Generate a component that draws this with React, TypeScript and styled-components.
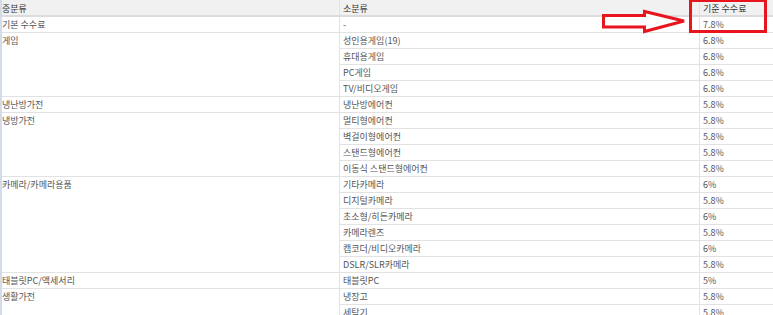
import React from 'react';
import styled, { createGlobalStyle } from 'styled-components';

const GlobalStyle = createGlobalStyle`
  html, body {
    margin: 0;
    padding: 0;
    background: #ffffff;
  }
  body {
    font-family: "Noto Sans CJK KR", "Noto Sans", sans-serif;
  }
`;

/* ── Layout ── */

const Frame = styled.div`
  position: relative;
  width: 773px;
  height: 315px;
  overflow: hidden;
  background: #eef1f5;
  border-left: 2px solid #d3dce8;
  box-sizing: border-box;
`;

const Table = styled.table`
  width: 767px;
  border-collapse: collapse;
  table-layout: fixed;
  font-size: 9px;
  color: #555555;
  background: #ffffff;
  border-right: 1px solid #d6d6d6;
`;

const HeadCell = styled.th<{ $w: number }>`
  width: ${({ $w }) => $w}px;
  height: 14px;
  padding: 1px 0 0 3px;
  text-align: left;
  font-weight: 400;
  color: #333333;
  background: #f1f1f1;
  border-bottom: 2px solid #dcdcdc;
  border-left: 1px solid #e2e2e2;
  line-height: 13px;
  white-space: nowrap;

  &:first-child {
    border-left: none;
    padding-left: 0;
  }
`;

const Cell = styled.td<{ $first?: boolean }>`
  height: 15px;
  padding: 0 0 0 ${({ $first }) => ($first ? 0 : 3)}px;
  vertical-align: top;
  line-height: 15px;
  border-bottom: 1px solid #e2e2e2;
  border-left: ${({ $first }) => ($first ? 'none' : '1px solid #e2e2e2')};
  white-space: nowrap;
`;

/* ── Overlays ── */

const Highlight = styled.div`
  position: absolute;
  left: 687px;
  top: 0;
  width: 78px;
  height: 33px;
  border: 3px solid #e8151f;
  border-top-width: 2px;
  box-sizing: border-box;
`;

const Arrow = styled.svg`
  position: absolute;
  left: 596px;
  top: 7px;
`;

/* ── Data ── */

interface Group {
  name: string;
  items: [string, string][];
}

const groups: Group[] = [
  { name: '기본 수수료', items: [['-', '7.8%']] },
  {
    name: '게임',
    items: [
      ['성인용게임(19)', '6.8%'],
      ['휴대용게임', '6.8%'],
      ['PC게임', '6.8%'],
      ['TV/비디오게임', '6.8%'],
    ],
  },
  { name: '냉난방가전', items: [['냉난방에어컨', '5.8%']] },
  {
    name: '냉방가전',
    items: [
      ['멀티형에어컨', '5.8%'],
      ['벽걸이형에어컨', '5.8%'],
      ['스탠드형에어컨', '5.8%'],
      ['이동식 스탠드형에어컨', '5.8%'],
    ],
  },
  {
    name: '카메라/카메라용품',
    items: [
      ['기타카메라', '6%'],
      ['디지털카메라', '5.8%'],
      ['초소형/히든카메라', '6%'],
      ['카메라렌즈', '5.8%'],
      ['캠코더/비디오카메라', '6%'],
      ['DSLR/SLR카메라', '5.8%'],
    ],
  },
  { name: '태블릿PC/액세서리', items: [['태블릿PC', '5%']] },
  {
    name: '생활가전',
    items: [
      ['냉장고', '5.8%'],
      ['세탁기', '5.8%'],
    ],
  },
];

const App: React.FC = () => (
  <>
    <GlobalStyle />
    <Frame>
      <Table>
        <thead>
          <tr>
            <HeadCell $w={337}>중분류</HeadCell>
            <HeadCell $w={356}>소분류</HeadCell>
            <HeadCell $w={74}>기준 수수료</HeadCell>
          </tr>
        </thead>
        <tbody>
          {groups.map((g) =>
            g.items.map(([sub, fee], i) => (
              <tr key={g.name + sub}>
                {i === 0 && (
                  <Cell $first rowSpan={g.items.length}>
                    {g.name}
                  </Cell>
                )}
                <Cell>{sub}</Cell>
                <Cell>{fee}</Cell>
              </tr>
            )),
          )}
        </tbody>
      </Table>
      <Arrow width="92" height="30" viewBox="0 0 92 30">
        <path
          d="M5.5 8.5 L46.5 8.5 L46.5 4.5 L86 14 L46.5 24.5 L46.5 20 L5.5 20 Z"
          fill="#ffffff"
          stroke="#e8151f"
          strokeWidth="3"
          strokeLinejoin="miter"
        />
      </Arrow>
      <Highlight />
    </Frame>
  </>
);

export default App;
